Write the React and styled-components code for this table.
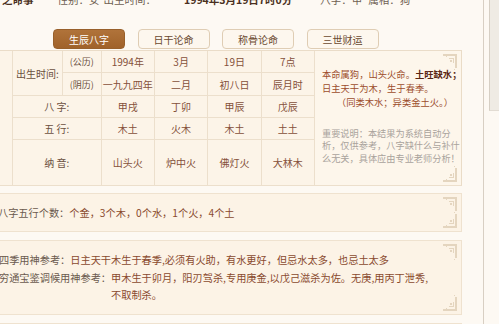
import React from 'react';
import styled, { createGlobalStyle, css } from 'styled-components';

const Global = createGlobalStyle`
  html, body { margin: 0; padding: 0; background: #fdf9f3; }
  body {
    font-family: "Noto Sans CJK SC", "Noto Sans", sans-serif;
    font-size: 10.2px;
    color: #6b5040;
    overflow: hidden;
  }
`;

const Page = styled.div`
  display: flex;
  align-items: flex-start;
  width: 499px;
  height: 324px;
  overflow: hidden;
`;

const Main = styled.div`
  flex: none;
  width: 483px;
  height: 324px;
  border-right: 1px solid #d8cfc3;
  overflow: hidden;
`;

const Sidebar = styled.div`
  flex: none;
  margin-left: 5px;
  width: 10px;
  height: 110px;
  background: #efebe4;
  border-left: 1px solid #d6cfc4;
  border-bottom: 1px solid #e2dcd3;
`;

const Content = styled.div`
  margin-left: -10px;
  width: 472px;
  display: flex;
  flex-direction: column;
`;

const TopLine = styled.div`
  display: flex;
  align-items: center;
  height: 14px;
  line-height: 14px;
  margin-top: -7px;
  padding-left: 12px;
  font-size: 10.5px;
  color: #6f5f52;
  white-space: nowrap;
`;

const TopItem = styled.span`
  margin-left: ${(p) => p.$ml || 0}px;
  ${(p) =>
    p.$strong &&
    css`
      color: #4a3020;
      font-weight: bold;
    `}
`;

const TabRow = styled.div`
  display: flex;
  gap: 12.5px;
  margin-top: 22px;
  padding-left: 63px;
`;

const Tab = styled.div`
  box-sizing: border-box;
  width: 72px;
  height: 20px;
  display: flex;
  align-items: center;
  justify-content: center;
  border: 1px solid #dfcdb4;
  border-radius: 4px;
  background: #fdf7ee;
  color: #6b4a30;
  font-size: 10px;
  ${(p) =>
    p.$active &&
    css`
      background: linear-gradient(#b0733a, #a0622a);
      border-color: #98602b;
      color: #fff;
    `}
`;

const Table = styled.div`
  margin-top: 1px;
  display: grid;
  grid-template-columns: 22.7px 50.3px 38.7px 53.3px 53.3px 53.3px 53.4px 1fr;
  grid-template-rows: 22px 23px 22px 22px 46px;
  border-top: 1px solid #eadcc8;
  background: #fcf4e8;
`;

const Cell = styled.div`
  box-sizing: border-box;
  display: flex;
  align-items: center;
  justify-content: center;
  border-right: 1px solid #ecdfcc;
  border-bottom: 1px solid #ecdfcc;
  color: ${(p) => (p.$label ? '#6b5040' : '#85503a')};
  font-size: ${(p) => (p.$small ? '9px' : '10px')};
  white-space: nowrap;
  grid-column: ${(p) => p.$col || 'auto'};
  grid-row: ${(p) => p.$row || 'auto'};
`;

const NoteCell = styled.div`
  position: relative;
  box-sizing: border-box;
  grid-column: 8;
  grid-row: 1 / span 5;
  padding: 16px 0 0 7px;
  border-right: 1px solid #eadcc7;
  border-bottom: 1px solid #ecdfcc;
  background: #fdf6eb;
  font-size: 9.3px;
  white-space: nowrap;
`;

const NoteMain = styled.div`
  line-height: 14px;
  color: #9c4d2c;
`;

const NoteIndent = styled.div`
  padding-left: 1.6em;
`;

const NoteStrong = styled.b`
  color: #5a2612;
`;

const NoteGray = styled.div`
  margin-top: 18px;
  line-height: 12.4px;
  color: #a9a39c;
  font-size: 9.2px;
`;

const Box = styled.div`
  position: relative;
  box-sizing: border-box;
  margin-top: ${(p) => p.$mt || 8}px;
  padding: ${(p) => p.$pad || '10px 25px 10px 8px'};
  background: #fcf3e6;
  border: 1px solid #efe2cf;
  line-height: ${(p) => p.$lh || 17}px;
  min-height: ${(p) => p.$minh || 0}px;
`;

const InfoRow = styled.div`
  display: flex;
  align-items: flex-start;
`;

const InfoLabel = styled.span`
  flex: none;
  color: #6a5a4e;
`;

const InfoValue = styled.span`
  flex: 1;
  color: #8a4a2e;
`;

const CornerWrap = styled.svg`
  position: absolute;
  right: 3px;
  ${(p) => (p.$bottom ? 'bottom: 2px; transform: scaleY(-1);' : 'top: 2px;')}
`;

function Corner({ bottom }) {
  return (
    <CornerWrap $bottom={bottom} width="18" height="18" viewBox="0 0 18 18">
      <g fill="#e4d5bf">
        <rect x="3" y="1" width="14" height="2" />
        <rect x="15" y="1" width="2" height="14" />
        <rect x="9" y="5" width="5" height="1" />
        <rect x="13" y="5" width="1" height="5" />
        <rect x="6" y="1" width="1" height="3" />
        <rect x="15" y="12" width="1" height="1" />
        <rect x="10" y="7" width="2" height="2" />
        <rect x="14" y="16" width="1" height="1" />
      </g>
    </CornerWrap>
  );
}

const pillars = [
  ['1994年', '一九九四年', '甲戌', '木土', '山头火'],
  ['3月', '二月', '丁卯', '火木', '炉中火'],
  ['19日', '初八日', '甲辰', '木土', '佛灯火'],
  ['7点', '辰月时', '戊辰', '土土', '大林木'],
];

export default function App() {
  return (
    <>
      <Global />
      <Page>
        <Main>
          <Content>
            <TopLine>
              <TopItem $strong>之命事</TopItem>
              <TopItem $ml={24}>性别：女</TopItem>
              <TopItem $ml={4}>出生时间：</TopItem>
              <TopItem $ml={28} $strong>1994年3月19日7时0分</TopItem>
              <TopItem $ml={28}>八字：甲</TopItem>
              <TopItem $ml={6}>属相：狗</TopItem>
            </TopLine>
            <TabRow>
              <Tab $active>生辰八字</Tab>
              <Tab>日干论命</Tab>
              <Tab>称骨论命</Tab>
              <Tab>三世财运</Tab>
            </TabRow>
            <Table>
              <Cell $col="1" $row="1 / span 5" />
              <Cell $label $col="2" $row="1 / span 2">出生时间:</Cell>
              <Cell $label $small $col="3" $row="1">(公历)</Cell>
              <Cell $label $small $col="3" $row="2">(阴历)</Cell>
              <Cell $label $col="2 / span 2" $row="3">八&nbsp;字:</Cell>
              <Cell $label $col="2 / span 2" $row="4">五&nbsp;行:</Cell>
              <Cell $label $col="2 / span 2" $row="5">纳&nbsp;音:</Cell>
              {pillars.map((p, i) =>
                p.map((v, r) => (
                  <Cell key={`${i}-${r}`} $col={String(4 + i)} $row={String(r + 1)}>
                    {v}
                  </Cell>
                ))
              )}
              <NoteCell>
                <Corner />
                <NoteMain>
                  <div>
                    本命属狗，山头火命。<NoteStrong>土旺缺水；</NoteStrong>
                  </div>
                  <div>日主天干为木，生于春季。</div>
                  <NoteIndent>（同类木水；异类金土火。）</NoteIndent>
                </NoteMain>
                <NoteGray>
                  重要说明：本结果为系统自动分
                  <br />
                  析，仅供参考，八字缺什么与补什
                  <br />
                  么无关，具体应由专业老师分析！
                </NoteGray>
                <Corner bottom />
              </NoteCell>
            </Table>
            <Box $mt={7} $pad="10px 25px 10px 7px">
              <Corner />
              <InfoRow>
                <InfoLabel>八字五行个数：</InfoLabel>
                <InfoValue>个金，3个木，0个水，1个火，4个土</InfoValue>
              </InfoRow>
              <Corner bottom />
            </Box>
            <Box $mt={8} $lh={17.5}>
              <Corner />
              <InfoRow>
                <InfoLabel>四季用神参考：</InfoLabel>
                <InfoValue>日主天干木生于春季,必须有火助，有水更好，但忌水太多，也忌土太多</InfoValue>
              </InfoRow>
              <InfoRow>
                <InfoLabel>穷通宝鉴调候用神参考：</InfoLabel>
                <InfoValue>甲木生于卯月，阳刃驾杀,专用庚金,以戊己滋杀为佐。无庚,用丙丁泄秀,不取制杀。</InfoValue>
              </InfoRow>
              <Corner bottom />
            </Box>
            <Box $mt={8} $minh={40}>
              <Corner />
            </Box>
          </Content>
        </Main>
        <Sidebar />
      </Page>
    </>
  );
}
